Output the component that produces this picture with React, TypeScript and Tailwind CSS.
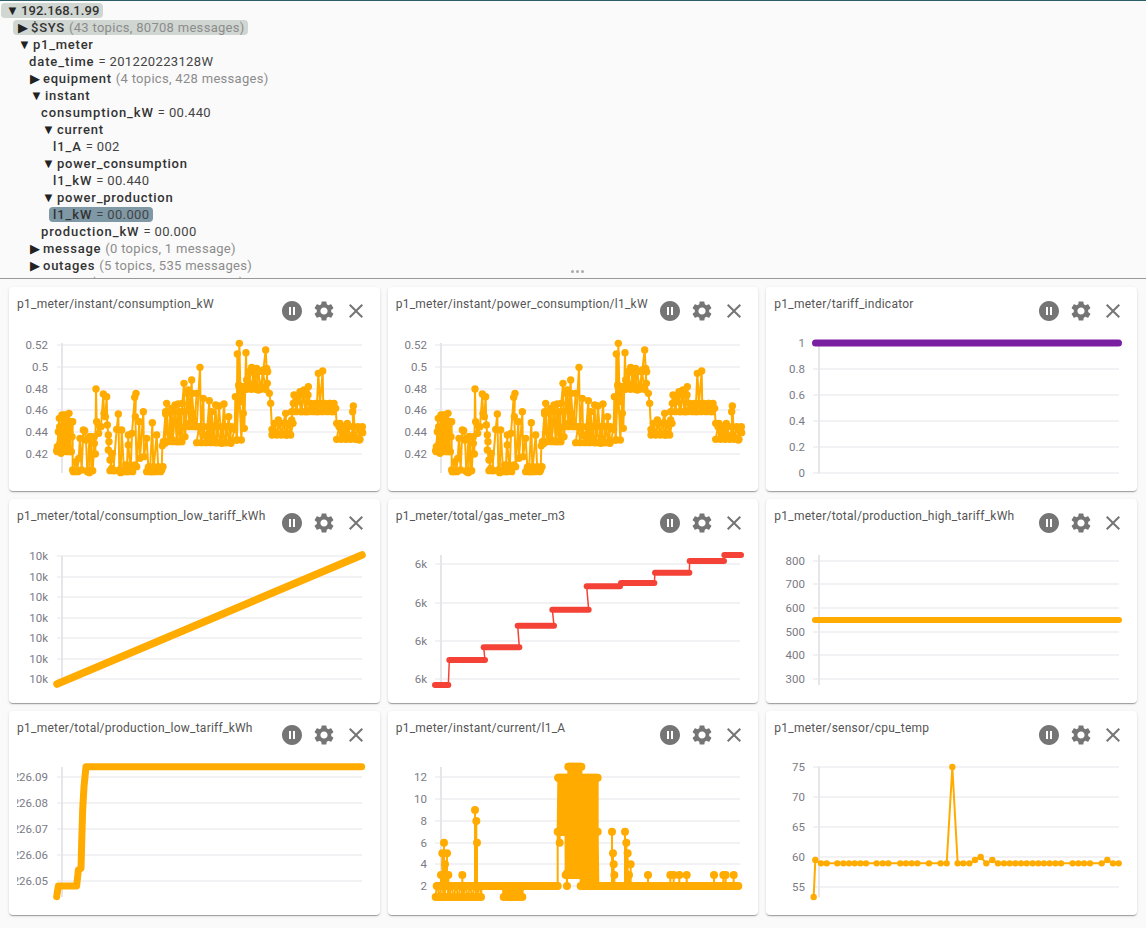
import React from "react";
import { MdClose, MdPauseCircleFilled, MdSettings } from "react-icons/md";

type Pt = [number, number];

const ORANGE = "#ffab00";
const RED = "#f44336";
const PURPLE = "#7b1fa2";

// zoomed crop coords to page coords
const toPage = (ox: number, oy: number, pts: Pt[]): Pt[] => pts.map(([x, y]) => [ox + x / 3, oy + y / 3]);

// zigzag between two levels, fills the dense stretches of the series
const blob = (from: number, to: number, top: number, bottom: number, step = 7): Pt[] => {
	const pts: Pt[] = [];
	for (let x = from, i = 0; x <= to; x += step, i++) pts.push([x, i % 2 ? top : bottom]);
	return pts;
};

const consumption: Pt[] = [
	[170, 512], [172, 500], [175, 455], [178, 415], [180, 490], [183, 520], [186, 405], [190, 505], [193, 405], [196, 490],
	[200, 405], [203, 500], [207, 400], [210, 515], [213, 425], [216, 470], [218, 425], [218, 570], [225, 575], [232, 572],
	[236, 535], [240, 475], [245, 570], [250, 450], [254, 452], [258, 480], [262, 575], [268, 578], [272, 470], [278, 572],
	[283, 490], [286, 522], [288, 327], [290, 425], [296, 460], [303, 440], [310, 342], [312, 400], [316, 410], [320, 350],
	[322, 435], [325, 465], [327, 485], [325, 510], [330, 540], [335, 565], [340, 572], [350, 448], [355, 402], [358, 570],
	[362, 578], [365, 450], [372, 572], [380, 575], [385, 465], [385, 495], [392, 572], [396, 460], [404, 352], [408, 340],
	[406, 410], [410, 560], [418, 425], [420, 535], [430, 395], [432, 530], [440, 475], [445, 562], [450, 575], [457, 428],
	[460, 575], [470, 465], [475, 570], [485, 570], [487, 497], [495, 490], [497, 402], [500, 370], [503, 455], [510, 480],
	[515, 385], [518, 480], [525, 375], [530, 485], [535, 372], [540, 485], [547, 370], [552, 310], [555, 470], [565, 330],
	[568, 430], [575, 300], [577, 400], [582, 420], [590, 440], [600, 262], [603, 445], [610, 355], [612, 465], [620, 470],
	[628, 362], [630, 485], [635, 395], [640, 485], [647, 375], [650, 488], [657, 378], [665, 490], [672, 372], [678, 488],
	[686, 410], [693, 490], [704, 448], [706, 350], [710, 480], [712, 222], [716, 315], [718, 190], [722, 365], [727, 320],
	[730, 400], [733, 445], [738, 218], [740, 300], [745, 320], [755, 262], [762, 325], [770, 265], [775, 330], [785, 320],
	[790, 270], [797, 210], [800, 265], [802, 310], [808, 340], [812, 370], [816, 448], [820, 460], [830, 460], [835, 420],
	[845, 460], [850, 430], [857, 400], [860, 465], [868, 460], [875, 420], [880, 370], [890, 365], [900, 335], [905, 395],
	[912, 330], [918, 395], [925, 320], [930, 390], [940, 390], [950, 395], [955, 280], [960, 370], [968, 273], [970, 390],
	[980, 390], [990, 370], [1000, 395], [1007, 385], [1010, 430], [1020, 430], [1027, 465], [1035, 470], [1042, 430],
	[1050, 470], [1060, 465], [1058, 395], [1060, 378], [1065, 470], [1078, 480], [1085, 445], [1088, 458],
];

// dense stretches drawn over the traced line
const consumptionFill: Pt[][] = [
	blob(172, 216, 440, 515), blob(220, 240, 545, 575), blob(262, 285, 470, 572), blob(330, 345, 520, 572),
	blob(370, 408, 555, 575), blob(440, 490, 560, 575), blob(490, 555, 395, 485), blob(555, 590, 340, 440),
	blob(590, 700, 440, 488), blob(710, 735, 320, 480), blob(740, 808, 275, 328), blob(816, 880, 430, 465),
	blob(875, 925, 345, 395), blob(925, 1005, 370, 395), blob(1010, 1088, 440, 478),
];

const cpuTemp: Pt[] = [
	[158, 561], [163, 450], [180, 460], [197, 460], [229, 460], [247, 460], [264, 460], [281, 460], [298, 460], [315, 460],
	[347, 460], [365, 460], [382, 460], [418, 460], [435, 460], [452, 460], [469, 460], [504, 460], [539, 460], [557, 460],
	[574, 171], [590, 460], [607, 460], [625, 460], [642, 450], [659, 441], [676, 460], [694, 450], [711, 460], [729, 460],
	[746, 460], [763, 460], [780, 460], [797, 460], [815, 460], [832, 460], [849, 460], [866, 460], [883, 460], [900, 460],
	[935, 460], [952, 460], [969, 460], [987, 460], [1022, 460], [1039, 450], [1056, 460], [1073, 460],
];

const gasSteps: [number, number, number][] = [
	[150, 190, 570], [193, 300, 495], [296, 403, 457], [398, 507, 392], [502, 611, 344],
	[605, 705, 274], [708, 808, 264], [810, 913, 233], [914, 1017, 198], [1018, 1068, 180],
];

const buildCurrent = (): Pt[] => {
	const pts: Pt[] = [];
	const spikes: Record<number, number> = { 168: 495, 172: 430, 177: 398, 180: 463, 186: 430, 190: 495, 232: 495, 270: 300, 274: 333, 276: 398, 681: 365, 684: 430, 686: 463, 688: 495, 720: 365, 724: 398, 728: 430, 732: 495, 737: 463, 789: 495, 856: 495, 866: 495, 883: 495, 905: 495, 987: 495, 1015: 495, 1022: 495, 1046: 495 };
	for (let x = 152; x <= 290; x += 7) {
		pts.push([x, x % 2 ? 528 : 561]);
		pts.push([x + 3, x % 2 ? 561 : 528]);
	}
	Object.keys(spikes).forEach((k) => {
		const x = Number(k);
		if (x < 290) pts.push([x, 528], [x, spikes[x]], [x, 528]);
	});
	for (let x = 290; x <= 518; x += 7) {
		pts.push([x, 528]);
		if (x > 350 && x < 415) pts.push([x + 3, 561], [x + 5, 528]);
	}
	pts.push([518, 528], [518, 365], [520, 203], [524, 398]);
	for (let x = 520; x <= 540; x += 3) pts.push([x, 203], [x + 1, 365]);
	pts.push([546, 528], [546, 490]);
	for (let x = 541; x <= 636; x += 3) pts.push([x, x > 548 && x < 592 ? 170 : 203], [x + 1, x < 585 ? 495 : 528]);
	pts.push([638, 203], [638, 365], [636, 528]);
	for (let x = 640; x <= 1065; x += 7) pts.push([x, 528]);
	Object.keys(spikes).forEach((k) => {
		const x = Number(k);
		if (x >= 640) pts.push([x, 528], [x, spikes[x]], [x, 528]);
	});
	pts.sort((a, b) => a[0] - b[0]);
	return pts;
};

type ChartCfg = {
	title: string;
	ticks: [string, number][];
	axisX: number;
	axisY: [number, number];
	gridX: [number, number];
	labelX: number;
	clipX?: number;
	draw: React.ReactNode;
};

const Dots = ({ pts, color, r = 3.7, w = 2 }: { pts: Pt[]; color: string; r?: number; w?: number }) => (
	<g>
		<polyline points={pts.map((p) => p.join(",")).join(" ")} fill="none" stroke={color} strokeWidth={w} strokeLinejoin="round" />
		{pts.map(([x, y], i) => (
			<circle key={i} cx={x} cy={y} r={r} fill={color} />
		))}
	</g>
);

const Thick = ({ pts, color, w = 7 }: { pts: Pt[]; color: string; w?: number }) => (
	<polyline points={pts.map((p) => p.join(",")).join(" ")} fill="none" stroke={color} strokeWidth={w} strokeLinecap="round" strokeLinejoin="round" />
);

const ConsumptionSeries = ({ ox }: { ox: number }) => (
	<g>
		<Dots pts={toPage(ox, 280, consumption)} color={ORANGE} />
		{consumptionFill.map((pts, i) => (
			<Dots key={i} pts={toPage(ox, 280, pts)} color={ORANGE} />
		))}
	</g>
);

const charts: ChartCfg[] = [
	{
		title: "p1_meter/instant/consumption_kW",
		ticks: [["0.52", 345], ["0.5", 367], ["0.48", 389], ["0.46", 410], ["0.44", 432], ["0.42", 454]],
		axisX: 62, axisY: [343, 473], gridX: [57, 362], labelX: 48,
		draw: <ConsumptionSeries ox={0} />,
	},
	{
		title: "p1_meter/instant/power_consumption/l1_kW",
		ticks: [["0.52", 345], ["0.5", 367], ["0.48", 389], ["0.46", 410], ["0.44", 432], ["0.42", 454]],
		axisX: 441, axisY: [343, 473], gridX: [435, 740], labelX: 427,
		draw: <ConsumptionSeries ox={379} />,
	},
	{
		title: "p1_meter/tariff_indicator",
		ticks: [["1", 343], ["0.8", 369], ["0.6", 395], ["0.4", 421], ["0.2", 447], ["0", 473]],
		axisX: 819, axisY: [343, 473], gridX: [813, 1119], labelX: 805,
		draw: <Thick pts={[[815.5, 343], [1118.5, 343]]} color={PURPLE} />,
	},
	{
		title: "p1_meter/total/consumption_low_tariff_kWh",
		ticks: [["10k", 556], ["10k", 577], ["10k", 597], ["10k", 618], ["10k", 638], ["10k", 659], ["10k", 679]],
		axisX: 62, axisY: [556, 685], gridX: [57, 362], labelX: 48,
		draw: <Thick pts={[[57, 684], [362, 555]]} color={ORANGE} w={7.5} />,
	},
	{
		title: "p1_meter/total/gas_meter_m3",
		ticks: [["6k", 564], ["6k", 603], ["6k", 641], ["6k", 679]],
		axisX: 441, axisY: [555, 683], gridX: [435, 740], labelX: 427,
		draw: (
			<g>
				<Thick w={1.5} color={RED} pts={toPage(385, 495, gasSteps.reduce<Pt[]>((acc, [a, b, y]) => [...acc, [a, y], [b, y]], []))} />
				{gasSteps.map(([a, b, y], i) => (
					<Thick key={i} w={6} color={RED} pts={toPage(385, 495, [[a, y], [b, y]])} />
				))}
			</g>
		),
	},
	{
		title: "p1_meter/total/production_high_tariff_kWh",
		ticks: [["800", 561], ["700", 584], ["600", 608], ["500", 632], ["400", 655], ["300", 679]],
		axisX: 819, axisY: [555, 685], gridX: [813, 1119], labelX: 805,
		draw: <Thick pts={[[815, 620], [1119, 620]]} color={ORANGE} w={6} />,
	},
	{
		title: "p1_meter/total/production_low_tariff_kWh",
		ticks: [["226.09", 777], ["226.08", 803], ["226.07", 829], ["226.06", 855], ["226.05", 881]],
		axisX: 62, axisY: [767, 897], gridX: [57, 362], labelX: 48, clipX: 17,
		draw: <Thick color={ORANGE} pts={toPage(0, 710, [[170, 560], [175, 528], [230, 528], [235, 480], [243, 475], [245, 400], [248, 300], [252, 230], [258, 170], [1085, 170]])} />,
	},
	{
		title: "p1_meter/instant/current/l1_A",
		ticks: [["12", 777], ["10", 799], ["8", 821], ["6", 843], ["4", 864], ["2", 886]],
		axisX: 441, axisY: [767, 897], gridX: [435, 740], labelX: 427,
		draw: <Dots pts={toPage(385, 710, buildCurrent())} color={ORANGE} r={4} />,
	},
	{
		title: "p1_meter/sensor/cpu_temp",
		ticks: [["75", 767], ["70", 797], ["65", 827], ["60", 857], ["55", 887]],
		axisX: 819, axisY: [767, 897], gridX: [813, 1119], labelX: 805,
		draw: <Dots pts={toPage(761, 710, cpuTemp)} color={ORANGE} r={3.2} />,
	},
];

const ChartCard = ({ cfg, col, row }: { cfg: ChartCfg; col: number; row: number }) => {
	const ox = [9, 388, 766][col];
	const oy = [287, 499, 711][row];
	const w = col === 1 ? 370 : 371;
	const clipId = `clip-${col}-${row}`;
	return (
		<div className="h-[204px] rounded bg-white shadow-[0_2px_1px_-1px_rgba(0,0,0,0.2),0_1px_1px_0_rgba(0,0,0,0.14),0_1px_3px_0_rgba(0,0,0,0.12)] flex flex-col overflow-hidden">
			<div className="h-[48px] flex items-start justify-between pl-2 pr-3">
				<div className="pt-[9px] text-[12px] leading-4 tracking-[0.25px] text-[#555] whitespace-nowrap">{cfg.title}</div>
				<div className="flex pt-3 text-[#757575] gap-2 shrink-0">
					<MdPauseCircleFilled size={24} />
					<MdSettings size={24} />
					<MdClose size={24} />
				</div>
			</div>
			<svg className="block" width={w} height={156} viewBox={`${ox} ${oy + 48} ${w} 156`}>
				<clipPath id={clipId}>
					<rect x={cfg.clipX ?? ox} y={oy} width={w} height={204} />
				</clipPath>
				{cfg.ticks.map(([label, y], i) => (
					<g key={i}>
						<line x1={cfg.gridX[0]} x2={cfg.gridX[1]} y1={y} y2={y} stroke="#eeeef0" strokeWidth={1.5} />
						<text x={cfg.labelX} y={y + 4} textAnchor="end" fontSize={11.5} fill="#7b7b85" clipPath={`url(#${clipId})`}>
							{label}
						</text>
					</g>
				))}
				<line x1={cfg.axisX} x2={cfg.axisX} y1={cfg.axisY[0]} y2={cfg.axisY[1]} stroke="#e6e6ea" strokeWidth={2} />
				{cfg.draw}
			</svg>
		</div>
	);
};

const Branch = ({ name, open, meta, pill, tight, children }: { name: string; open?: boolean; meta?: string; pill?: boolean; tight?: boolean; children?: React.ReactNode }) => (
	<div>
		<div className="h-[17px] flex items-center">
			<span className={`inline-flex items-center h-[15px] rounded whitespace-nowrap ${pill ? "bg-[#d0d6d1] pr-[3px] -ml-[5px] pl-[5px]" : ""}`}>
				<span className={`text-[13px] leading-none text-[#222] shrink-0 ${open ? "w-[15px]" : "w-[13px]"}`}>{open ? "▼" : "▶"}</span>
				<span className={`font-medium text-[#333] ${tight ? "tracking-[0.1px]" : "tracking-[0.75px]"}`}>{name}</span>
				{meta && <span className="font-normal text-[#8c8c8c] ml-1 tracking-[0.3px]">({meta})</span>}
			</span>
		</div>
		{children && <div className="pl-3">{children}</div>}
	</div>
);

const Leaf = ({ name, value, active }: { name: string; value: string; active?: boolean }) => (
	<div className="h-[17px] flex items-center -ml-px">
		<span className={`inline-flex items-center h-[15px] rounded whitespace-nowrap ${active ? "bg-[#7f98a6] px-[4px] -ml-[4px]" : ""}`}>
			<span className="font-medium text-[#333] tracking-[0.9px]">{name}</span>
			<span className="text-[#444] ml-1 tracking-[0.35px]">= {value}</span>
		</span>
	</div>
);

const Tree = () => (
	<div className="relative h-[279px] border-t border-t-[#2d5f6b] border-b-[1.5px] border-b-[#999] overflow-hidden pl-[6px] pt-px text-[13px]">
		<Branch name="192.168.1.99" open pill tight>
			<Branch name="$SYS" meta="43 topics, 80708 messages" pill />
			<Branch name="p1_meter" open>
				<Leaf name="date_time" value="201220223128W" />
				<Branch name="equipment" meta="4 topics, 428 messages" />
				<Branch name="instant" open>
					<Leaf name="consumption_kW" value="00.440" />
					<Branch name="current" open>
						<Leaf name="l1_A" value="002" />
					</Branch>
					<Branch name="power_consumption" open>
						<Leaf name="l1_kW" value="00.440" />
					</Branch>
					<Branch name="power_production" open>
						<Leaf name="l1_kW" value="00.000" active />
					</Branch>
					<Leaf name="production_kW" value="00.000" />
				</Branch>
				<Branch name="message" meta="0 topics, 1 message" />
				<Branch name="outages" meta="5 topics, 535 messages" />
				<Branch name="sensor" meta="6 topics, 396 messages" />
			</Branch>
		</Branch>
		<div className="absolute left-[571px] bottom-[5px] flex gap-[2px]">
			<div className="w-[3px] h-[3px] rounded-full bg-[#aaa]" />
			<div className="w-[3px] h-[3px] rounded-full bg-[#aaa]" />
			<div className="w-[3px] h-[3px] rounded-full bg-[#aaa]" />
		</div>
	</div>
);

export default function App() {
	return (
		<div className="w-[1146px] h-[928px] overflow-hidden bg-[#fafafa] font-['Roboto',sans-serif]">
			<Tree />
			<div className="grid grid-cols-3 gap-2 px-[9px] pt-2">
				{charts.map((cfg, i) => (
					<ChartCard key={cfg.title} cfg={cfg} col={i % 3} row={Math.floor(i / 3)} />
				))}
			</div>
		</div>
	);
}
